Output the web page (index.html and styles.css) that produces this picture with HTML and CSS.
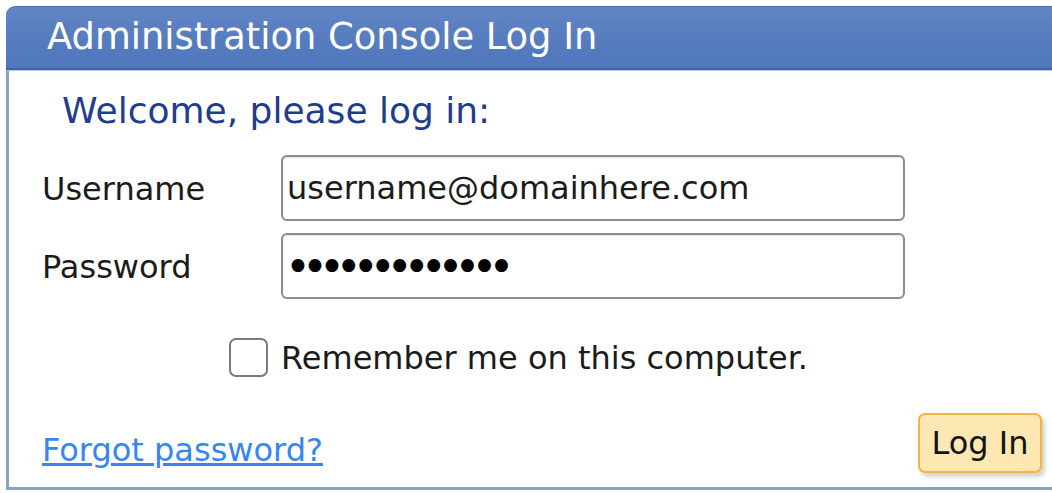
FILE: index.html
```html
<!DOCTYPE html>
<html lang="en">
<head>
<meta charset="utf-8">
<title>Administration Console Log In</title>
<link rel="stylesheet" href="styles.css">
</head>
<body>
  <div class="panel">
    <div class="panel-head">Administration Console Log In</div>
    <form class="panel-body" onsubmit="return false">
      <div class="welcome">Welcome, please log in:</div>
      <div class="fields">
        <label class="field-label" for="user">Username</label>
        <input class="field-input" id="user" type="text" value="username@domainhere.com">
        <label class="field-label" for="pass">Password</label>
        <input class="field-input field-pass" id="pass" type="password" value="secretpasswor">
      </div>
      <label class="remember">
        <input class="check" type="checkbox">
        <span>Remember me on this computer.</span>
      </label>
      <div class="actions">
        <a class="forgot" href="#">Forgot password?</a>
        <button class="login" type="submit">Log In</button>
      </div>
    </form>
  </div>
</body>
</html>
```
FILE: styles.css
```css
html, body {
  margin: 0;
  padding: 0;
  background: #ffffff;
  overflow: hidden;
}

body {
  font-family: "DejaVu Sans", Verdana, sans-serif;
  color: #1b1b1b;
}

.panel {
  margin: 6px 0 0 6px;
  width: 1046px;
  display: flex;
  flex-direction: column;
}

.panel-head {
  height: 64px;
  box-sizing: border-box;
  border-top-left-radius: 9px;
  border-top: 1px solid #4a6eae;
  border-bottom: 2px solid #3d659f;
  background: linear-gradient(#6285c4, #567cbf 55%, #4f77bb);
  color: #ffffff;
  font-size: 36.8px;
  padding-left: 41px;
  display: flex;
  align-items: center;
  padding-bottom: 3px;
}

.panel-body {
  height: 420px;
  box-sizing: border-box;
  border-left: 3px solid #8aa2c6;
  border-bottom: 3px solid #8aa2c6;
  border-top: 1px solid #b7c9e4;
  display: flex;
  flex-direction: column;
  margin: 0;
}

.welcome {
  font-size: 36px;
  line-height: 42px;
  color: #1e3d8f;
  margin: 19px 0 0 53px;
}

.fields {
  display: grid;
  grid-template-columns: 239px 624px;
  row-gap: 12px;
  align-items: center;
  margin: 23px 0 0 33px;
}

.field-label {
  font-size: 32px;
  line-height: 37px;
  padding-top: 3px;
}

.field-input {
  height: 66px;
  box-sizing: border-box;
  border: 2px solid #8c8c8c;
  border-radius: 6px;
  box-shadow: inset 0 1px 2px rgba(0, 0, 0, 0.12);
  padding: 0 4px;
  font-family: "DejaVu Sans", Verdana, sans-serif;
  font-size: 32px;
  color: #1b1b1b;
  background: #ffffff;
  outline: none;
}

/* larger, tighter bullets for the masked password */
.field-pass {
  font-size: 44px;
  letter-spacing: -9px;
  padding-left: 2px;
  color: #000000;
}

.remember {
  display: flex;
  align-items: center;
  gap: 13px;
  margin: 39px 0 0 220px;
  font-size: 32px;
  line-height: 38px;
}

.check {
  appearance: none;
  -webkit-appearance: none;
  width: 39px;
  height: 39px;
  margin: 0;
  box-sizing: border-box;
  border: 2px solid #7b7b7b;
  border-radius: 7px;
  background: #ffffff;
}

.actions {
  margin-top: auto;
  display: flex;
  justify-content: space-between;
  align-items: flex-end;
  padding: 0 10px 14px 33px;
}

.forgot {
  font-size: 32px;
  line-height: 37px;
  color: #3686f2;
  text-decoration: underline;
  text-underline-offset: 2px;
  margin-bottom: 4px;
}

.login {
  width: 124px;
  height: 60px;
  box-sizing: border-box;
  border: 2px solid #f3b446;
  border-radius: 7px;
  background: #fde7b2;
  box-shadow: 3px 4px 4px rgba(0, 0, 0, 0.18);
  font-family: "DejaVu Sans", Verdana, sans-serif;
  font-size: 32px;
  color: #141414;
  padding: 0;
}
```
